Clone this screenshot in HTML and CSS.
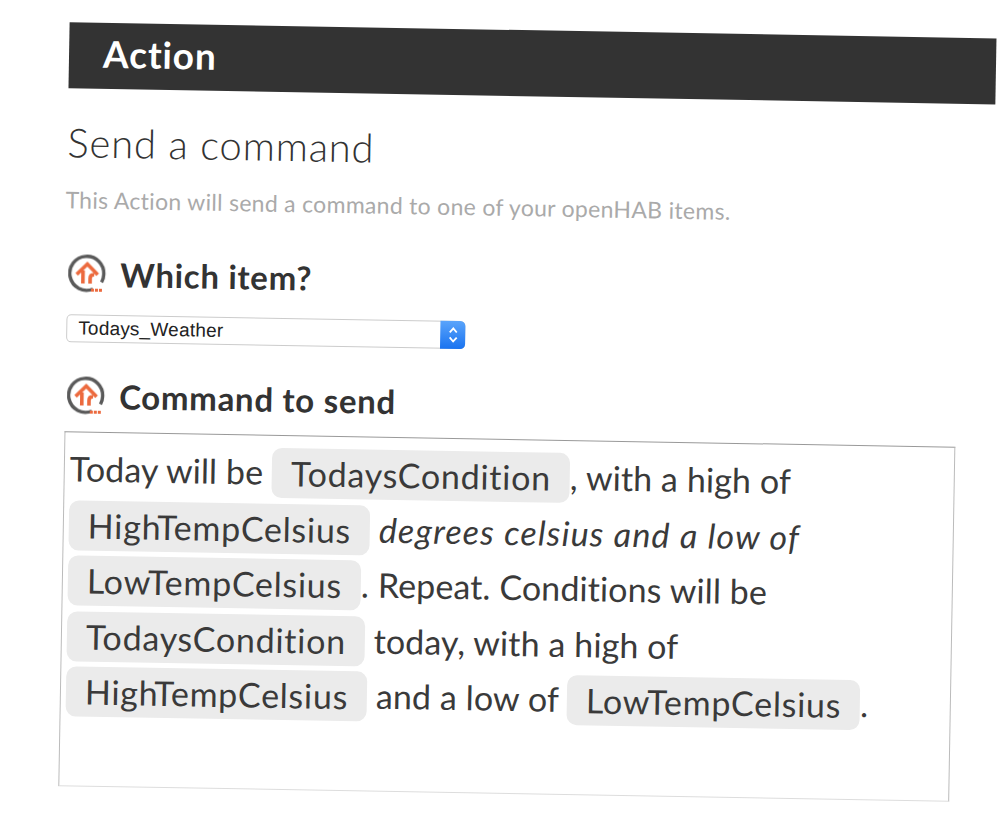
FILE: index.html
```html
<!DOCTYPE html>
<html lang="en">
<head>
<meta charset="utf-8">
<title>Send a command</title>
<link rel="stylesheet" href="styles.css">
</head>
<body>
<main class="page">
  <header class="bar"><h1 class="bar-title">Action</h1></header>
  <h2 class="action-name">Send a command</h2>
  <p class="action-desc">This Action will send a command to one of your openHAB items.</p>

  <div class="field-label label-first">
    <svg class="service-icon" viewBox="0 0 38 38" aria-hidden="true">
      <path class="ring" d="M25 34.500A17 17 0 1 1 35.500 20q0 4-2 7.500"/>
      <path class="house" d="M8.500 20 19 9.500 29.500 20M14.800 16v13M22 29v-5.500q0-3.500 4-3.500"/>
      <path class="dots" d="M23 34h3v3h-3zM27 34h3v3h-3zM31 34h3v3h-3z"/>
    </svg>
    <h3 class="label-text">Which item?</h3>
  </div>
  <div class="select">
    <span class="select-value">Todays_Weather</span>
    <span class="select-arrows">
      <svg viewBox="0 0 14 22" width="14" height="22" aria-hidden="true">
        <path d="M3.500 8.500 7 4.500l3.500 4M3.500 13.500 7 17.500l3.500-4" fill="none" stroke="#fff" stroke-width="1.800"/>
      </svg>
    </span>
  </div>

  <div class="field-label label-second">
    <svg class="service-icon" viewBox="0 0 38 38" aria-hidden="true">
      <path class="ring" d="M25 34.500A17 17 0 1 1 35.500 20q0 4-2 7.500"/>
      <path class="house" d="M8.500 20 19 9.500 29.500 20M14.800 16v13M22 29v-5.500q0-3.500 4-3.500"/>
      <path class="dots" d="M23 34h3v3h-3zM27 34h3v3h-3zM31 34h3v3h-3z"/>
    </svg>
    <h3 class="label-text">Command to send</h3>
  </div>
  <div class="command">Today will be <span class="chip">TodaysCondition</span>, with a high of <span class="chip">HighTempCelsius</span> <em class="slant">degrees celsius and a low of</em> <span class="chip">LowTempCelsius</span>. Repeat. Conditions will be <span class="chip">TodaysCondition</span> today, with a high of <span class="chip">HighTempCelsius</span> and a low of <span class="chip">LowTempCelsius</span>.</div>
</main>
</body>
</html>
```

FILE: styles.css
```css
html, body {
  margin: 0;
  height: 100%;
  overflow: hidden;
  background: #fff;
}

.page {
  box-sizing: border-box;
  width: 1000px;
  padding: 21px 0 0 70px;
  transform: rotate(1deg);
  transform-origin: 0 0;
  font-family: "Lato", "Noto Sans", sans-serif;
  color: #333;
}

.bar {
  width: 927px;
  height: 66px;
  box-sizing: border-box;
  padding: 0 0 6px 34px;
  display: flex;
  align-items: center;
  background: #333;
}

.bar-title {
  margin: 0;
  font-size: 37px;
  font-weight: 700;
  letter-spacing: 0.9px;
  color: #fff;
}

.action-name {
  margin: 31px 0 0;
  font-size: 40px;
  line-height: 46px;
  font-weight: 300;
  letter-spacing: 0.8px;
}

.action-desc {
  margin: 20px 0 0 -1px;
  font-size: 23px;
  line-height: 28px;
  letter-spacing: 0.3px;
  color: #aaa;
}

.field-label {
  display: flex;
  align-items: center;
  gap: 14px;
  height: 38px;
}

.label-first { margin: 41px 0 0 3px; }
.label-second { margin: 34px 0 0 4px; }

.service-icon {
  width: 38px;
  height: 38px;
  flex: none;
  filter: blur(0.4px);
}

.ring {
  fill: none;
  stroke: #5a5a5a;
  stroke-width: 3.4;
}

.house {
  fill: none;
  stroke: #ec6a3e;
  stroke-width: 3.6;
}

.dots { fill: #ec6a3e; }

.label-text {
  margin: 0;
  font-size: 33px;
  font-weight: 700;
  letter-spacing: 0.7px;
}

.select {
  box-sizing: border-box;
  width: 399px;
  height: 28px;
  margin: 22px 0 0 2px;
  display: flex;
  justify-content: space-between;
  border: 1px solid #ccc;
  border-radius: 5px;
  background: #fff;
  font-family: "Liberation Sans", Arial, sans-serif;
  font-size: 19px;
  line-height: 26px;
  letter-spacing: 0.2px;
  color: #222;
}

.select-value { padding-left: 11px; }

.select-arrows {
  width: 25px;
  margin: -1px -1px -1px 0;
  display: flex;
  align-items: center;
  justify-content: center;
  border-radius: 0 5px 5px 0;
  background: linear-gradient(#5aa4fb, #1a73f0);
}

.command {
  box-sizing: border-box;
  width: 891px;
  height: 355px;
  margin: 17px 0 0 2px;
  padding: 8px 4px 0 5px;
  border: 1px solid #bbb;
  border-top-color: #999;
  border-bottom-color: #ddd;
  font-size: 34px;
  line-height: 55.5px;
  letter-spacing: 0.1px;
  color: #3a3a3a;
}

.chip {
  display: inline-block;
  height: 50px;
  line-height: 50px;
  padding: 0 19px;
  border-radius: 10px;
  background: #ebebeb;
  vertical-align: top;
  margin-top: 4px;
  letter-spacing: 0.75px;
}

.slant {
  font-style: italic;
  letter-spacing: 1.2px;
}
```
